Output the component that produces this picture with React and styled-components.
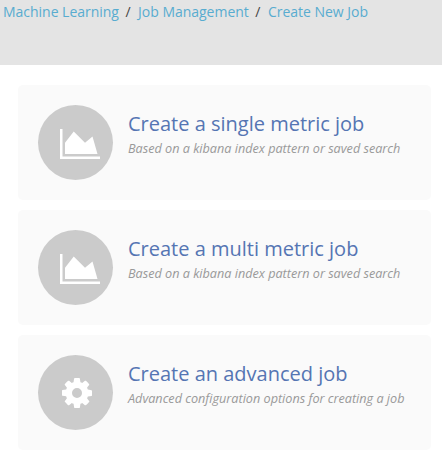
import React from "react";
import styled, { createGlobalStyle } from "styled-components";

const GlobalStyle = createGlobalStyle`
  * { box-sizing: border-box; }
  body { margin: 0; background: #fff; font-family: "Open Sans", sans-serif; overflow: hidden; }
`;

const Header = styled.header`
  height: 65px;
  padding: 2px 0 0 3px;
  background: #e4e4e4;
`;

const Breadcrumbs = styled.nav`
  display: flex;
  font-size: 14px;
  line-height: 20px;
  letter-spacing: -0.02px;
  white-space: nowrap;
`;

const Crumb = styled.a`
  color: #58acd0;
  & + &::before { content: "/"; color: #444; padding: 0 7.500px 0 6.500px; }
`;

const JobList = styled.main`
  display: flex;
  flex-direction: column;
  gap: 10px;
  padding: 20px 11px 0 18px;
`;

const Card = styled.a`
  display: flex;
  height: 115px;
  padding: 20px;
  gap: 15px;
  background: #fafafa;
  border-radius: 5px;
`;

const IconCircle = styled.div`
  display: flex;
  flex: none;
  width: 75px;
  height: 75px;
  border-radius: 50%;
  background: #cbcbcb;
  color: #fff;
`;

const ChartSvg = styled.svg`
  width: 40px;
  height: 30px;
  margin: 23.5px 0 0 22px;
`;

const GearSvg = styled.svg`
  width: 30px;
  height: 30px;
  margin: 23.3px 0 0 23.6px;
`;

const CardText = styled.div`
  padding-top: 4px;
  white-space: nowrap;
`;

const Title = styled.h4`
  margin: 0;
  font-size: 20px;
  line-height: 30px;
  font-weight: 400;
  color: #5575b3;
`;

const Description = styled.p`
  margin: 0;
  font-size: 12.65px;
  line-height: 19px;
  font-weight: 400;
  font-style: italic;
  color: #999;
`;

const ChartIcon = () => (
  <ChartSvg viewBox="0 0 2048 1536" fill="currentColor">
    <path d="M2048 1408v128H0V0h128v1408h1920zM1664 384l256 896H256V704l448-576 576 576z" />
  </ChartSvg>
);

const GearIcon = () => (
  <GearSvg viewBox="0 0 1536 1536" fill="currentColor">
    <path d="M1024 768q0-106-75-181t-181-75-181 75-75 181 75 181 181 75 181-75 75-181zm512-109v222q0 12-8 23t-20 13l-185 28q-19 54-39 91 35 50 107 138 10 12 10 25t-9 23q-27 37-99 108t-94 71q-12 0-26-9l-138-108q-44 23-91 38-16 136-29 186-7 28-36 28H657q-14 0-24.500-8.500T621 1506l-28-184q-49-16-90-37l-141 107q-10 9-25 9-14 0-25-11-126-114-165-168-7-10-7-23 0-12 8-23 15-21 51-66.500t54-70.500q-27-50-41-99L29 913q-13-2-21-12.500T0 877V655q0-12 8-23t19-13l186-28q14-46 39-92-40-57-107-138-10-12-10-24 0-10 9-23 26-36 98.500-107.500T337 135q13 0 26 10l138 107q44-23 91-38 16-136 29-186 7-28 36-28h222q14 0 24.500 8.500T915 30l28 184q49 16 90 37l142-107q9-9 24-9 13 0 25 10 129 119 165 170 7 8 7 22 0 12-8 23-15 21-51 66.500t-54 70.500q26 50 41 98l183 28q13 2 21 12.500t8 23.500z" />
  </GearSvg>
);

const jobs = [
  { title: "Create a single metric job", description: "Based on a kibana index pattern or saved search", Icon: ChartIcon },
  { title: "Create a multi metric job", description: "Based on a kibana index pattern or saved search", Icon: ChartIcon },
  { title: "Create an advanced job", description: "Advanced configuration options for creating a job", Icon: GearIcon },
];

export default function App() {
  return (
    <>
      <GlobalStyle />
      <Header>
        <Breadcrumbs>
          <Crumb>Machine Learning</Crumb>
          <Crumb>Job Management</Crumb>
          <Crumb>Create New Job</Crumb>
        </Breadcrumbs>
      </Header>
      <JobList>
        {jobs.map(({ title, description, Icon }) => (
          <Card key={title}>
            <IconCircle><Icon /></IconCircle>
            <CardText>
              <Title>{title}</Title>
              <Description>{description}</Description>
            </CardText>
          </Card>
        ))}
      </JobList>
    </>
  );
}
